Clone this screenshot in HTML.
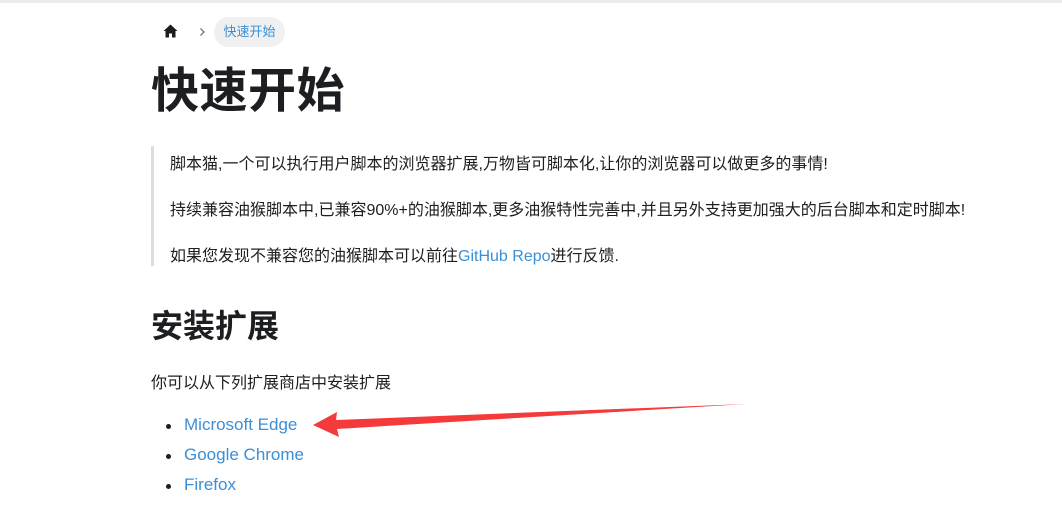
<!DOCTYPE html>
<html><head><meta charset="utf-8"><style>
body{margin:0;width:1062px;height:511px;overflow:hidden;background:#fff;font-family:"Liberation Sans","Noto Sans CJK SC",sans-serif;color:#1c1e21;position:relative}
.top{position:absolute;left:0;top:0;width:1062px;height:3px;background:#ececec}
.a{position:absolute;white-space:nowrap}
.pill{position:absolute;left:214px;top:17px;width:71px;height:30px;border-radius:15px;background:#f0f0f0;color:#3b8fd6;font-size:13px;line-height:30px;text-align:center}
h1{position:absolute;left:151px;top:62px;margin:0;font-size:48px;line-height:60px;font-weight:700;letter-spacing:0.5px}
.bq{position:absolute;left:151px;top:146px;height:120px;border-left:3px solid #dadde1}
.p{font-size:16px;color:#1c1e21}
a{color:#3b8fd6;text-decoration:none}
h2{position:absolute;left:151px;top:306px;margin:0;font-size:32px;line-height:40px;font-weight:700}
.dot{position:absolute;left:166px;width:5px;height:5px;border-radius:50%;background:#1c1e21}
.li{font-size:17px}
</style></head><body>
<div class="top"></div>
<svg class="a" style="left:163px;top:24px" width="15" height="14" viewBox="0 0 15 14"><path d="M7.5 0.5L0.5 7H2.5V13.5H6V9.5H9V13.5H12.5V7H14.5Z" fill="#1c1e21"/></svg>
<svg class="a" style="left:199px;top:27px" width="7" height="10" viewBox="0 0 7 10"><path d="M1.5 1.5L5 5L1.5 8.5" stroke="#777" stroke-width="1.3" fill="none"/></svg>
<div class="pill">快速开始</div>
<h1>快速开始</h1>
<div class="bq"></div>
<div class="a p" style="left:170px;top:150px">脚本猫,一个可以执行用户脚本的浏览器扩展,万物皆可脚本化,让你的浏览器可以做更多的事情!</div>
<div class="a p" style="left:170px;top:196px">持续兼容油猴脚本中,已兼容90%+的油猴脚本,更多油猴特性完善中,并且另外支持更加强大的后台脚本和定时脚本!</div>
<div class="a p" style="left:170px;top:242px">如果您发现不兼容您的油猴脚本可以前往<a>GitHub Repo</a>进行反馈.</div>
<h2>安装扩展</h2>
<div class="a p" style="left:151px;top:369px">你可以从下列扩展商店中安装扩展</div>
<div class="dot" style="top:424px"></div><div class="a li" style="left:184px;top:415px"><a>Microsoft Edge</a></div>
<div class="dot" style="top:454px"></div><div class="a li" style="left:184px;top:445px"><a>Google Chrome</a></div>
<div class="dot" style="top:484px"></div><div class="a li" style="left:184px;top:475px"><a>Firefox</a></div>
<svg class="a" style="left:0;top:0" width="1062" height="511"><path d="M313 425L337 412L336 420L746 404L337 429L339 437Z" fill="#f43a3a"/></svg>
</body></html>
